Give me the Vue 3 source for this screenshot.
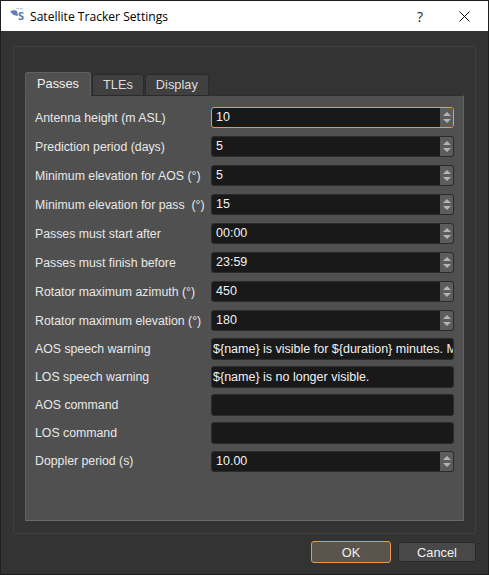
<script setup>
const rows = [
  { label: 'Antenna height (m ASL)', value: '10', type: 'spin', focus: true },
  { label: 'Prediction period (days)', value: '5', type: 'spin' },
  { label: 'Minimum elevation for AOS (°)', value: '5', type: 'spin' },
  { label: 'Minimum elevation for pass  (°)', value: '15', type: 'spin' },
  { label: 'Passes must start after', value: '00:00', type: 'spin' },
  { label: 'Passes must finish before', value: '23:59', type: 'spin' },
  { label: 'Rotator maximum azimuth (°)', value: '450', type: 'spin' },
  { label: 'Rotator maximum elevation (°)', value: '180', type: 'spin' },
  { label: 'AOS speech warning', value: '${name} is visible for ${duration} minutes. Max elevation', type: 'line' },
  { label: 'LOS speech warning', value: '${name} is no longer visible.', type: 'line' },
  { label: 'AOS command', value: '', type: 'line' },
  { label: 'LOS command', value: '', type: 'line' },
  { label: 'Doppler period (s)', value: '10.00', type: 'spin' },
]
</script>

<template>
  <div class="window">
    <header class="titlebar">
      <svg class="logo" width="20" height="18" viewBox="0 0 20 18">
        <path d="M1 4.5 L5 3 L8 4 L9 9 L4.5 8 Z" fill="#5b7fb5" />
        <path d="M7 2 Q10.5 0.5 14 2" fill="none" stroke="#b5c4dc" stroke-width="1" />
        <text x="9" y="13" class="logo-s">S</text>
      </svg>
      <span class="title">Satellite Tracker Settings</span>
      <span class="help">?</span>
      <svg class="close" width="11" height="11" viewBox="0 0 11 11">
        <path d="M0.5 0.5 L10.5 10.5 M10.5 0.5 L0.5 10.5" stroke="#111" stroke-width="1" fill="none" />
      </svg>
    </header>
    <main class="body">
      <section class="group">
        <nav class="tabs">
          <div class="tab active">Passes</div>
          <div class="tab">TLEs</div>
          <div class="tab">Display</div>
        </nav>
        <div class="pane">
          <div v-for="r in rows" :key="r.label" class="row" :class="r.type">
            <label class="label">{{ r.label }}</label>
            <div class="field" :class="{ focus: r.focus }">
              <span class="value">{{ r.value }}</span>
              <div v-if="r.type === 'spin'" class="spinner">
                <i class="up"></i>
                <i class="down"></i>
              </div>
            </div>
          </div>
        </div>
      </section>
      <footer class="buttons">
        <div class="btn default">OK</div>
        <div class="btn">Cancel</div>
      </footer>
    </main>
  </div>
</template>

<style>
html, body { margin: 0; background: #1b1b1b; }
</style>

<style scoped>
.window {
  width: 489px;
  height: 575px;
  box-sizing: border-box;
  padding: 1px;
  background: #1f1f1f;
  display: flex;
  flex-direction: column;
  overflow: hidden;
  font-family: "Liberation Sans", Arial, sans-serif;
  color: #e6e6e6;
}
.titlebar {
  height: 30px;
  flex: none;
  background: #fff;
  display: flex;
  align-items: center;
  padding-left: 8px;
  color: #000;
}
.logo { flex: none; margin-right: 1px; }
.logo-s { font: bold 11px "Open Sans", sans-serif; fill: #4f78b0; }
.title { font: 12.1px "Open Sans", sans-serif; flex: 1; white-space: nowrap; }
.help { font: 14px "Open Sans", sans-serif; color: #222; margin-right: 36px; }
.close { margin-right: 18px; flex: none; }
.body {
  flex: 1;
  background: #333333;
  display: flex;
  flex-direction: column;
  padding: 15px 12px 10px 12px;
  min-height: 0;
}
.group {
  height: 488px;
  flex: none;
  box-sizing: border-box;
  border: 1px solid #3f3f3f;
  border-radius: 2px;
  padding: 25px 11px 12px 11px;
  display: flex;
  flex-direction: column;
}
.tabs {
  display: flex;
  align-items: flex-end;
  height: 24px;
  flex: none;
  gap: 1px;
  position: relative;
  z-index: 1;
  margin-bottom: -1px;
}
.tab {
  box-sizing: border-box;
  height: 22px;
  padding: 0 10px 1px;
  background: #404040;
  border: 1px solid #2a2a2a;
  border-radius: 3px 3px 0 0;
  display: flex;
  align-items: center;
  font-size: 12.8px;
  color: #dcdcdc;
}
.tab.active {
  height: 24px;
  padding: 0 11px 2px;
  background: #505050;
  border-color: #606060;
  border-bottom-color: #505050;
  color: #f0f0f0;
}
.pane {
  flex: 1;
  box-sizing: border-box;
  background: #505050;
  border: 1px solid #2e2e2e;
  border-right-color: #626262;
  border-bottom-color: #6a6a6a;
  border-left-color: #626262;
  padding: 9px 9px 0 9px;
  display: flex;
  flex-direction: column;
}
.row {
  display: grid;
  grid-template-columns: 176px 1fr;
  align-items: center;
  height: 24px;
  margin-bottom: 4px;
}
.row.spin { margin-bottom: 5px; }
.label {
  font-size: 12.3px;
  color: #e8e8e8;
  white-space: pre;
}
.row.spin .label { padding-top: 1px; }
.row.spin:last-child .label { padding-top: 0; }
.field {
  box-sizing: border-box;
  height: 21px;
  background: #191919;
  border: 1px solid #2b2b2b;
  border-radius: 3px;
  display: flex;
  align-items: center;
  overflow: hidden;
  position: relative;
}
.row.line .field { height: 22px; }
.field.focus { border-color: #f29b3a; }
.value {
  flex: 1;
  min-width: 0;
  padding-left: 4px;
  font-size: 12.5px;
  color: #f2f2f2;
  white-space: nowrap;
  overflow: hidden;
}
.row.line .value { padding-left: 1px; }
.spinner {
  flex: none;
  width: 13px;
  align-self: stretch;
  background: #5c5c5c;
  display: flex;
  flex-direction: column;
  align-items: center;
  justify-content: center;
  gap: 3px;
}
.spinner i {
  display: block;
  width: 0;
  height: 0;
  border-left: 4px solid transparent;
  border-right: 4px solid transparent;
}
.spinner .up { border-bottom: 4px solid #b4b4b4; }
.spinner .down { border-top: 4px solid #b4b4b4; }
.buttons {
  display: flex;
  justify-content: flex-end;
  align-items: center;
  gap: 7px;
  padding-top: 7px;
}
.btn {
  box-sizing: border-box;
  width: 78px;
  height: 20px;
  background: #484848;
  border: 1px solid #2a2a2a;
  border-radius: 3px;
  display: flex;
  align-items: center;
  justify-content: center;
  font-size: 12.8px;
  color: #f0f0f0;
}
.btn.default {
  width: 80px;
  height: 22px;
  background: #5a544d;
  border-color: #e79a48;
}
</style>
